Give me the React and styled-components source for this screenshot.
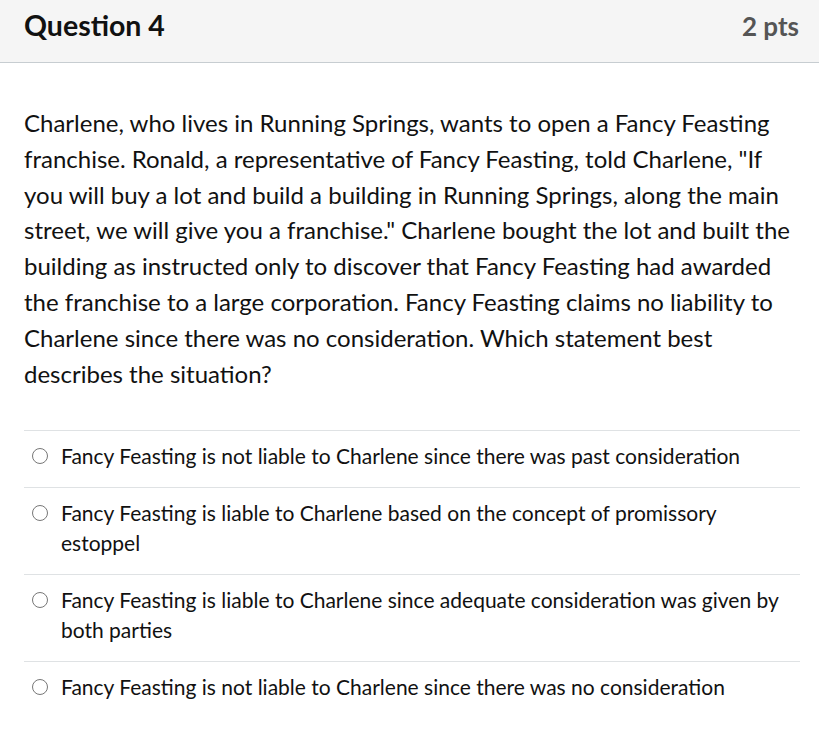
import React from "react";
import styled, { createGlobalStyle } from "styled-components";

const Global = createGlobalStyle`
  html, body { margin: 0; padding: 0; background: #fff; }
  body { font-family: Lato, "Liberation Sans", sans-serif; color: #111; }
`;

const Page = styled.div`
  width: 819px;
  min-height: 745px;
  background: #fff;
`;

const Header = styled.header`
  height: 63px;
  box-sizing: border-box;
  display: flex;
  align-items: baseline;
  justify-content: space-between;
  padding: 8px 20px 0 24px;
  background: #f5f5f5;
  border-bottom: 1px solid #c7cdd1;
`;

const Title = styled.h2`
  margin: 0;
  font-size: 28.5px;
  line-height: 1.2;
  font-weight: 700;
  color: #111;
`;

const Points = styled.span`
  font-size: 26px;
  font-weight: 700;
  color: #555;
`;

const Body = styled.div`
  padding: 42px 19px 0 24px;
`;

const Prompt = styled.p`
  margin: 0 0 39px;
  font-size: 24px;
  line-height: 35.8px;
  color: #111;
`;

const Answers = styled.ul`
  list-style: none;
  margin: 0;
  padding: 0;
`;

const Answer = styled.li`
  display: flex;
  align-items: flex-start;
  gap: 13px;
  padding: 10px 0 16px 8px;
  border-top: 1px solid #dfe2e4;
`;

const Radio = styled.span`
  flex: none;
  width: 16px;
  height: 16px;
  box-sizing: border-box;
  margin-top: 7px;
  border: 1.5px solid #777;
  border-radius: 50%;
  background: #fff;
`;

const AnswerText = styled.span`
  font-size: 21px;
  line-height: 30px;
  color: #111;
`;

const answers = [
  "Fancy Feasting is not liable to Charlene since there was past consideration",
  "Fancy Feasting is liable to Charlene based on the concept of promissory estoppel",
  "Fancy Feasting is liable to Charlene since adequate consideration was given by both parties",
  "Fancy Feasting is not liable to Charlene since there was no consideration",
];

export default function App() {
  return (
    <Page>
      <Global />
      <Header>
        <Title>Question 4</Title>
        <Points>2 pts</Points>
      </Header>
      <Body>
        <Prompt>
          Charlene, who lives in Running Springs, wants to open a Fancy Feasting
          franchise. Ronald, a representative of Fancy Feasting, told Charlene, "If
          you will buy a lot and build a building in Running Springs, along the main
          street, we will give you a franchise." Charlene bought the lot and built the
          building as instructed only to discover that Fancy Feasting had awarded
          the franchise to a large corporation. Fancy Feasting claims no liability to
          Charlene since there was no consideration. Which statement best
          describes the situation?
        </Prompt>
        <Answers>
          {answers.map((a) => (
            <Answer key={a}>
              <Radio />
              <AnswerText>{a}</AnswerText>
            </Answer>
          ))}
        </Answers>
      </Body>
    </Page>
  );
}
